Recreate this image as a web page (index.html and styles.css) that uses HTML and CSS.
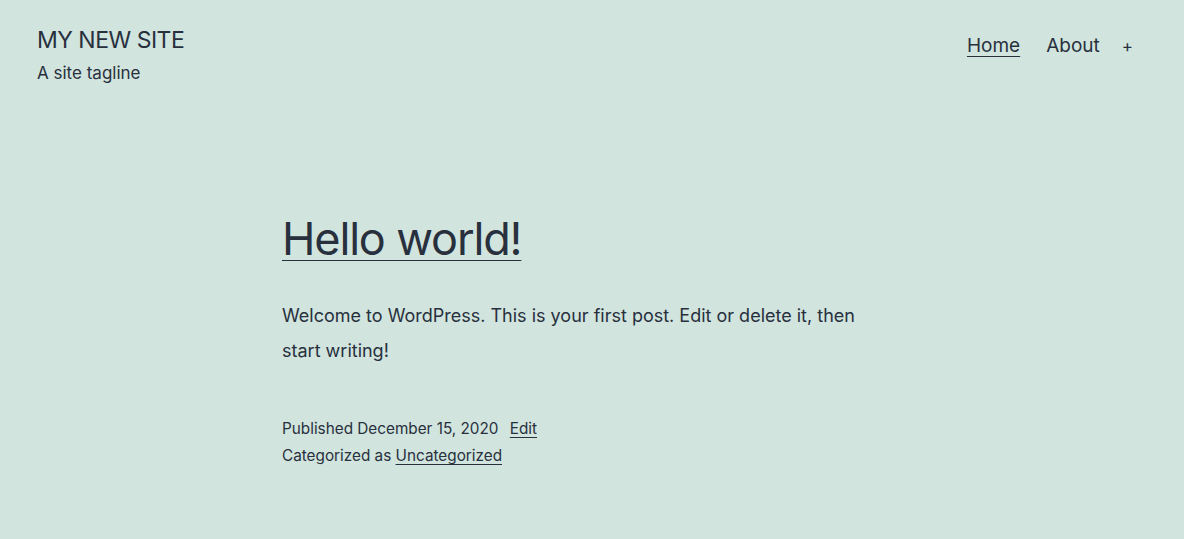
FILE: index.html
```html
<!DOCTYPE html>
<html lang="en">
<head>
<meta charset="utf-8">
<title>MY NEW SITE</title>
<link rel="stylesheet" href="styles.css">
</head>
<body>
<header class="site-header">
  <div class="branding">
    <p class="site-title">MY NEW SITE</p>
    <p class="site-tagline">A site tagline</p>
  </div>
  <nav class="nav">
    <a class="nav-link current" href="#">Home</a>
    <a class="nav-link" href="#">About</a>
    <span class="nav-plus">+</span>
  </nav>
</header>
<main class="content">
  <article class="post">
    <h2 class="entry-title"><a href="#">Hello world!</a></h2>
    <p class="entry-text">Welcome to WordPress. This is your first post. Edit or delete it, then start writing!</p>
    <footer class="entry-meta">
      <div>Published December 15, 2020 <a href="#" class="meta-link edit">Edit</a></div>
      <div>Categorized as <a href="#" class="meta-link">Uncategorized</a></div>
    </footer>
  </article>
</main>
</body>
</html>
```
FILE: styles.css
```css
html, body {
  margin: 0;
  padding: 0;
}
body {
  background: #d1e4dd;
  color: #28303d;
  font-family: Inter, "Liberation Sans", sans-serif;
  height: 539px;
  overflow: hidden;
}
a { color: #28303d; }
p { margin: 0; }

.site-header {
  display: flex;
  justify-content: space-between;
  align-items: flex-start;
  padding: 26px 51px 0 37px;
}
.site-title {
  font-size: 23px;
  line-height: 28px;
  letter-spacing: -0.5px;
}
.site-tagline {
  font-size: 17px;
  line-height: 24px;
  margin-top: 7px;
}
.nav {
  display: flex;
  align-items: center;
  gap: 26px;
  padding-top: 6px;
  font-size: 19px;
  line-height: 28px;
}
.nav-link {
  text-decoration: none;
}
.nav-link.current {
  text-decoration: underline;
  text-underline-offset: 4px;
  text-decoration-thickness: 1px;
}
.nav-plus {
  font-size: 17px;
  margin-left: -4px;
}

.content {
  padding-left: 282px;
  padding-top: 126px;
}
.post {
  width: 600px;
}
.entry-title {
  margin: 0;
  font-weight: 400;
  font-size: 45px;
  line-height: 56px;
  letter-spacing: -1.15px;
}
.entry-title a {
  text-decoration: underline;
  text-decoration-thickness: 1px;
  text-underline-offset: 5px;
}
.entry-text {
  margin-top: 31px;
  font-size: 18px;
  line-height: 35px;
  letter-spacing: 0;
}
.entry-meta {
  margin-top: 47px;
  font-size: 15.3px;
  line-height: 27px;
}
.meta-link {
  text-underline-offset: 3px;
  text-decoration-thickness: 1px;
}
.edit { margin-left: 7px; }
```
